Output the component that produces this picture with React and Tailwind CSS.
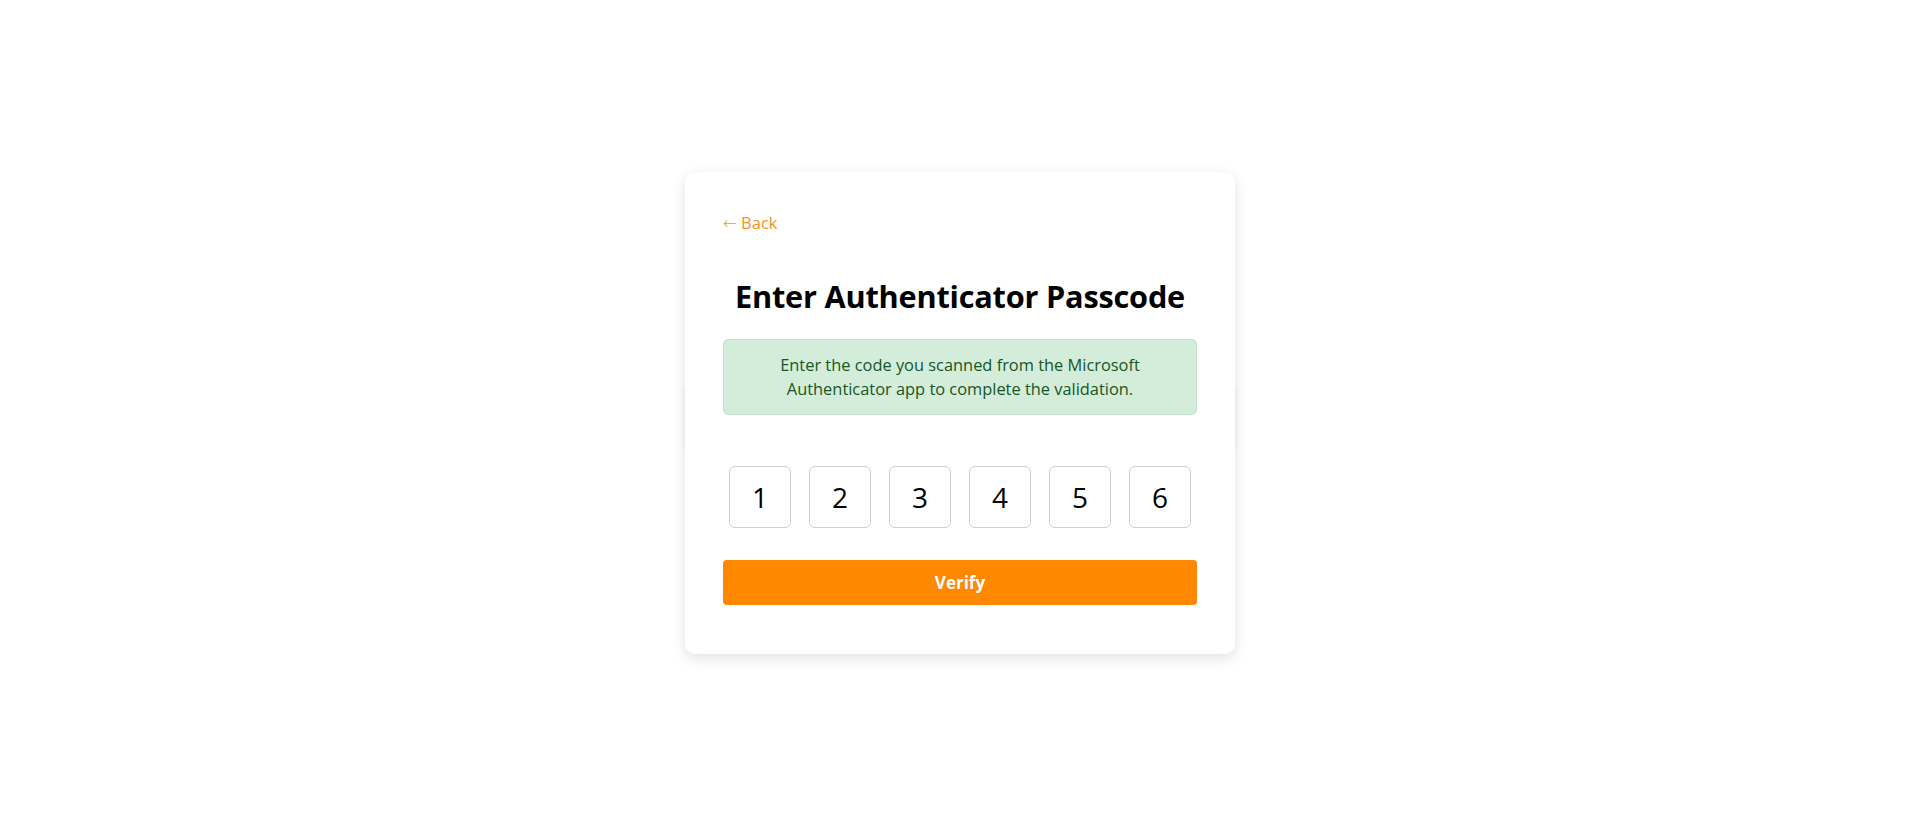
import React from "react";

export default function App() {
  const digits = ["1", "2", "3", "4", "5", "6"];
  return (
    <div
      className="min-h-[826px] w-full bg-white flex items-center justify-center"
      style={{ fontFamily: '"Open Sans", "Noto Sans", sans-serif' }}
    >
      <div className="relative w-[550px]">
        <div className="absolute left-0 right-0 top-[214px] h-[64px] rounded-[4px] shadow-[0_0_6px_rgba(0,0,0,0.07)]" />
        <div className="relative bg-white rounded-[10px] shadow-[0_4px_14px_rgba(0,0,0,0.12)] px-[38px] pt-[38px] pb-[49px] flex flex-col">
          <a className="text-[16.5px] leading-[25px] text-[#f7941d] self-start cursor-pointer">
            <span style={{ fontFamily: '"DejaVu Sans", sans-serif' }} className="font-light">←</span> Back
          </a>
          <h1 className="mt-[41px] text-center text-[30.7px] leading-[38px] font-bold text-black tracking-[-0.2px]">
            Enter Authenticator Passcode
          </h1>
          <div className="mt-[24px] rounded-[5px] border border-[#c3e6cb] bg-[#d4edda] px-[30px] py-[13px] text-center text-[16.4px] leading-[24px] text-[#155724]">
            Enter the code you scanned from the Microsoft Authenticator app to complete the validation.
          </div>
          <div className="mt-[51px] flex justify-center gap-[18px]">
            {digits.map((d) => (
              <input
                key={d}
                readOnly
                value={d}
                className="w-[62px] h-[62px] rounded-[6px] border border-[#cfcfcf] bg-white text-center text-[28px] text-black outline-none"
                style={{ fontFamily: '"Open Sans", "Noto Sans", sans-serif' }}
              />
            ))}
          </div>
          <button className="mt-[32px] h-[45px] w-full rounded-[4px] bg-[#ff8800] text-white text-[17px] font-bold">
            Verify
          </button>
        </div>
      </div>
    </div>
  );
}
